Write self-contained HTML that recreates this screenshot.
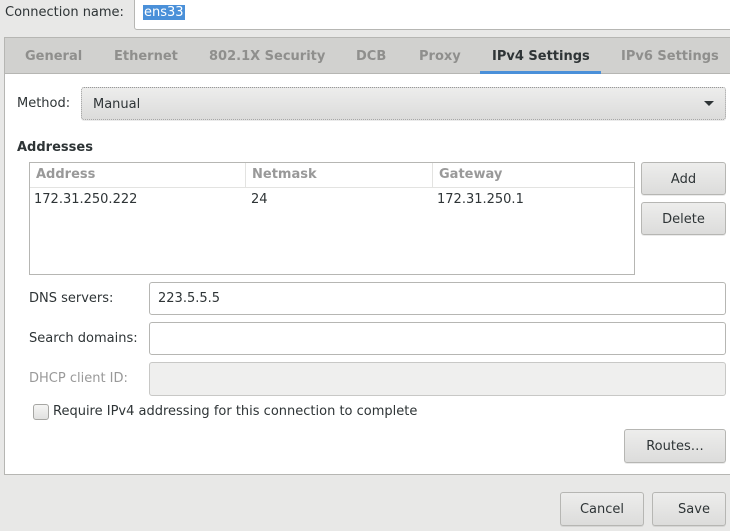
<!DOCTYPE html>
<html><head><style>
*{box-sizing:border-box;margin:0;padding:0}
body{width:730px;height:531px;background:#e8e8e7;font-family:"DejaVu Sans",sans-serif;font-size:13px;color:#2e3436;position:relative;overflow:hidden}
.a{position:absolute;white-space:nowrap}
.entry{position:absolute;background:#fff;border:1px solid #b6b6b3;border-radius:3px}
.btn{position:absolute;border:1px solid #b6b6b3;border-radius:3px;background:linear-gradient(#ededec,#dcdcdb);display:flex;align-items:center;justify-content:center;box-shadow:0 1px 0 rgba(0,0,0,.08);padding-top:1px}
.tab{position:absolute;top:49px;font-weight:bold;color:#8f8f8d}
</style></head><body>
<div class="a" style="left:5px;top:5px">Connection name:</div>
<div class="entry" style="left:134px;top:-3px;width:610px;height:33px"></div>
<div class="a" style="left:143px;top:5px;background:#4a90d9;color:#fff;padding:0 1px">ens33</div>

<div class="a" style="left:4px;top:37px;width:730px;height:438px;background:#fff;border:1px solid #b6b6b3;border-right:none"></div>
<div class="a" style="left:5px;top:38px;width:725px;height:36px;background:#d1d1cf;border-bottom:1px solid #b6b6b3"></div>
<div class="tab" style="left:25px">General</div>
<div class="tab" style="left:114px">Ethernet</div>
<div class="tab" style="left:209px">802.1X Security</div>
<div class="tab" style="left:356px">DCB</div>
<div class="tab" style="left:419px">Proxy</div>
<div class="tab" style="left:492px;color:#2e3436">IPv4 Settings</div>
<div class="tab" style="left:621px">IPv6 Settings</div>
<div class="a" style="left:480px;top:71px;width:121px;height:3px;background:#4a90d9"></div>

<div class="a" style="left:17px;top:96px">Method:</div>
<div class="btn" style="left:81px;top:87px;width:645px;height:33px;justify-content:flex-start;padding-left:11px;padding-top:2px;border-style:dotted;border-color:#999">Manual</div>
<div class="a" style="left:704px;top:101px;width:0;height:0;border-left:5px solid transparent;border-right:5px solid transparent;border-top:5px solid #2e3436"></div>

<div class="a" style="left:17px;top:140px;font-weight:bold">Addresses</div>
<div class="a" style="left:29px;top:162px;width:606px;height:113px;border:1px solid #b6b6b3;background:#fff"></div>
<div class="a" style="left:30px;top:187px;width:604px;height:1px;background:#e3e3e1"></div>
<div class="a" style="left:245px;top:163px;width:1px;height:24px;background:#e3e3e1"></div>
<div class="a" style="left:432px;top:163px;width:1px;height:24px;background:#e3e3e1"></div>
<div class="a" style="left:36px;top:167px;font-weight:bold;color:#999">Address</div>
<div class="a" style="left:252px;top:167px;font-weight:bold;color:#999">Netmask</div>
<div class="a" style="left:439px;top:167px;font-weight:bold;color:#999">Gateway</div>
<div class="a" style="left:34px;top:192px">172.31.250.222</div>
<div class="a" style="left:251px;top:192px">24</div>
<div class="a" style="left:437px;top:192px">172.31.250.1</div>
<div class="btn" style="left:641px;top:162px;width:85px;height:33px">Add</div>
<div class="btn" style="left:641px;top:202px;width:85px;height:33px">Delete</div>

<div class="a" style="left:29px;top:291px">DNS servers:</div>
<div class="entry" style="left:149px;top:282px;width:577px;height:33px"></div>
<div class="a" style="left:158px;top:291px">223.5.5.5</div>
<div class="a" style="left:29px;top:331px">Search domains:</div>
<div class="entry" style="left:149px;top:322px;width:577px;height:33px"></div>
<div class="a" style="left:29px;top:371px;color:#999">DHCP client ID:</div>
<div class="entry" style="left:149px;top:362px;width:577px;height:34px;background:#efefee;border-color:#c8c8c6"></div>

<div class="a" style="left:33px;top:404px;width:16px;height:16px;border:1px solid #a6a6a3;border-radius:3px;background:linear-gradient(#f5f5f4,#e1e1e0)"></div>
<div class="a" style="left:53px;top:404px">Require IPv4 addressing for this connection to complete</div>
<div class="btn" style="left:624px;top:429px;width:102px;height:34px">Routes…</div>

<div class="btn" style="left:560px;top:492px;width:84px;height:34px">Cancel</div>
<div class="btn" style="left:652px;top:492px;width:74px;height:34px;padding-left:10px">Save</div>
</body></html>
